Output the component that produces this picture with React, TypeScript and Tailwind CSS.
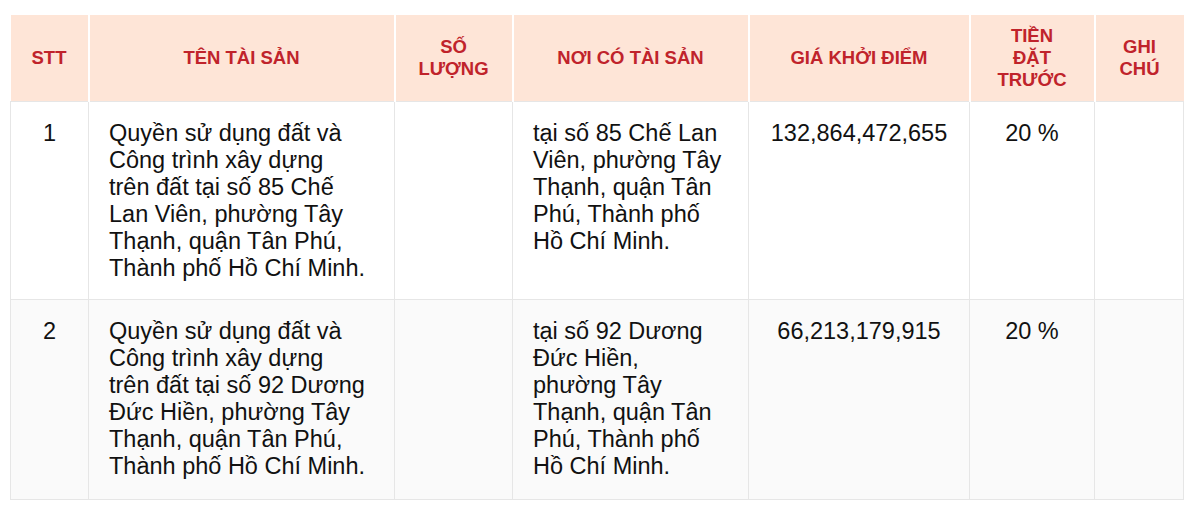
import React from "react";

type Asset = {
  stt: number;
  name: string;
  qty: string;
  place: string;
  price: string;
  deposit: string;
  note: string;
};

const assets: Asset[] = [
  {
    stt: 1,
    name: "Quyền sử dụng đất và Công trình xây dựng trên đất tại số 85 Chế Lan Viên, phường Tây Thạnh, quận Tân Phú, Thành phố Hồ Chí Minh.",
    qty: "",
    place: "tại số 85 Chế Lan Viên, phường Tây Thạnh, quận Tân Phú, Thành phố Hồ Chí Minh.",
    price: "132,864,472,655",
    deposit: "20 %",
    note: "",
  },
  {
    stt: 2,
    name: "Quyền sử dụng đất và Công trình xây dựng trên đất tại số 92 Dương Đức Hiền, phường Tây Thạnh, quận Tân Phú, Thành phố Hồ Chí Minh.",
    qty: "",
    place: "tại số 92 Dương Đức Hiền, phường Tây Thạnh, quận Tân Phú, Thành phố Hồ Chí Minh.",
    price: "66,213,179,915",
    deposit: "20 %",
    note: "",
  },
];

const th =
  "h-[86px] border-x-2 border-white bg-[#fee5d7] px-1 text-center align-middle text-[18.5px] font-bold uppercase leading-[22px] text-[#c0232b]";
const td =
  "border border-[#e6e6e6] pl-5 pt-[18px] align-top text-[23.5px] leading-[27px] text-[#111]";

export default function App() {
  return (
    <div className="min-h-[509px] bg-white pl-[10px] pt-[15px] font-['Liberation_Sans',Arial,sans-serif]">
      <table className="w-[1173px] table-fixed border-collapse">
        <colgroup>
          <col className="w-[78px]" />
          <col className="w-[306px]" />
          <col className="w-[118px]" />
          <col className="w-[236px]" />
          <col className="w-[221px]" />
          <col className="w-[125px]" />
          <col className="w-[89px]" />
        </colgroup>
        <thead>
          <tr>
            <th className={th + " border-l-0"}>STT</th>
            <th className={th}>Tên tài sản</th>
            <th className={th}>
              Số
              <br />
              lượng
            </th>
            <th className={th}>Nơi có tài sản</th>
            <th className={th}>Giá khởi điểm</th>
            <th className={th}>
              Tiền
              <br />
              đặt
              <br />
              trước
            </th>
            <th className={th + " border-r-0"}>
              Ghi
              <br />
              chú
            </th>
          </tr>
        </thead>
        <tbody>
          {assets.map((a, i) => {
            const last = i === assets.length - 1;
            const cell = td + (last ? " pb-[19px]" : " pb-[17px]");
            return (
              <tr key={a.stt} className={i % 2 === 1 ? "bg-[#fafafa]" : "bg-white"}>
                <td className={cell + " pr-5 text-center"}>{a.stt}</td>
                <td className={cell + " pr-[26px]"}>{a.name}</td>
                <td className={cell + " pr-5"}>{a.qty}</td>
                <td className={cell + " pr-5"}>{a.place}</td>
                <td className={cell + " pr-5 text-center"}>{a.price}</td>
                <td className={cell + " pr-5 text-center"}>{a.deposit}</td>
                <td className={cell + " pr-5"}>{a.note}</td>
              </tr>
            );
          })}
        </tbody>
      </table>
    </div>
  );
}
